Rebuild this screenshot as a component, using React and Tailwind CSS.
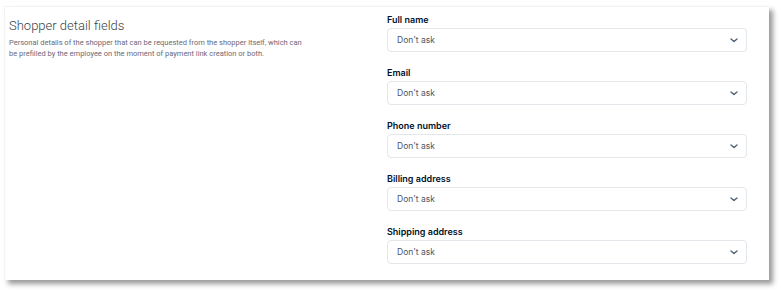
const fields = ["Full name", "Email", "Phone number", "Billing address", "Shipping address"];

function Chevron() {
  return (
    <svg width="8" height="5" viewBox="0 0 8 5" fill="none" className="text-[#4a5b72]">
      <path d="M1 1l3 2.6L7 1" stroke="currentColor" strokeWidth="1.3" strokeLinecap="round" strokeLinejoin="round" />
    </svg>
  );
}

export default function App() {
  return (
    <div className="w-[781px] h-[291px] bg-white overflow-hidden font-['Roboto',sans-serif]">
      <div className="ml-[4px] mt-[6px] w-[765px] h-[274px] bg-white border-t border-l border-[#f3f3f3] shadow-[4px_4px_5px_rgba(0,0,0,0.4)] flex">
        <div className="w-[383px] pl-[4px] pt-[10px]">
          <h2 className="text-[13px] leading-[18px] font-light text-[#3a3f47]">Shopper detail fields</h2>
          <p className="mt-[2px] w-[302px] text-[7.5px] leading-[11px] text-[#6d6877]">
            Personal details of the shopper that can be requested from the shopper itself, which can be prefilled by the employee on the moment of payment link creation or both.
          </p>
        </div>
        <div className="w-[359px] pt-[7px] flex flex-col gap-[15px] font-['Inter',sans-serif]">
          {fields.map((f) => (
            <div key={f}>
              <div className="text-[9px] leading-[12px] font-semibold text-[#00112c] mb-[2px] -ml-[1px]">{f}</div>
              <div className="h-[24px] -ml-[1px] border border-[#e3e6ea] rounded-[4px] flex items-center justify-between pl-[9px] pr-[8px]">
                <span className="text-[8.5px] text-[#4d5563]">Don't ask</span>
                <Chevron />
              </div>
            </div>
          ))}
        </div>
      </div>
    </div>
  );
}
